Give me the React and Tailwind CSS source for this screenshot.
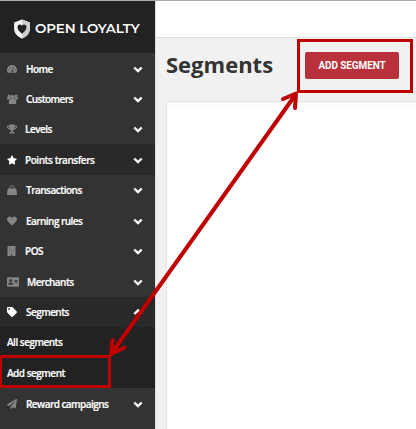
import React from "react";
import {
  FaTrophy, FaStar, FaHeart, FaAddressCard, FaTag, FaPaperPlane,
} from "react-icons/fa";

function GaugeIcon({ className }) {
  return (
    <svg viewBox="0 0 20 20" className={className} fill="currentColor">
      <path d="M10 2C4.500 2 0 6.500 0 12c0 2 .5 3.700 1.300 5.500h17.400c.8-1.800 1.300-3.500 1.300-5.500C20 6.500 15.500 2 10 2Z" />
      <g fill="#444444">
        <circle cx="3.500" cy="12" r="1.200" />
        <circle cx="5.600" cy="7.700" r="1.200" />
        <circle cx="10" cy="5.500" r="1.200" />
        <circle cx="16.500" cy="12" r="1.200" />
        <path d="m12.300 7 1.600.6-2 5.400a2.300 2.300 0 1 1-1.600-.6Z" />
      </g>
    </svg>
  );
}

function PeopleIcon({ className }) {
  return (
    <svg viewBox="0 0 22 20" className={className} fill="currentColor">
      <circle cx="4" cy="4" r="3" />
      <circle cx="18" cy="4" r="3" />
      <path d="M0 11V9c0-1.500 1-2.500 2.200-2.500h4.500V11ZM22 11V9c0-1.500-1-2.500-2.200-2.500h-4.500V11Z" />
      <circle cx="11" cy="6" r="4.200" />
      <path d="M3.500 17.500c0-4.500 1-7.500 4-7.500h7c3 0 4 3 4 7.500 0 1.500-1 2.500-2.500 2.500H6c-1.500 0-2.500-1-2.500-2.500Z" />
    </svg>
  );
}

function BagIcon({ className }) {
  return (
    <svg viewBox="0 0 20 20" className={className} fill="currentColor">
      <path d="M1.500 7h17L20 17.500V20H0v-2.500Z" />
      <path d="M6 9V5.500a4 4 0 0 1 8 0V9" fill="none" stroke="currentColor" strokeWidth="2" />
    </svg>
  );
}

function BuildingIcon({ className }) {
  return (
    <svg viewBox="0 0 18 20" className={className} fill="currentColor">
      <path d="M1 0h16v20H1Z" />
      <path d="M4 4h10M4 8h10M4 12h10" stroke="#6a6a6a" strokeWidth="1.500" strokeDasharray="2 2" />
      <path d="M7 16h4v4H7Z" fill="#555555" />
    </svg>
  );
}

function Chevron({ up }) {
  return (
    <svg viewBox="0 0 10 10" className="size-[10px] shrink-0" fill="none" stroke="white" strokeWidth="2.400">
      {up ? <path d="M1.300 7 5 3.400 8.700 7" /> : <path d="M1.300 3.500 5 7.100 8.700 3.500" />}
    </svg>
  );
}

function Row({ icon: Icon, label, active, open, size = "size-[10px]", row, text = "" }) {
  return (
    <div className={`flex shrink-0 items-center pl-[7px] pr-[12px] ${row} ${active ? "bg-[#292929]" : "bg-[#333333]"}`}>
      <span className={`flex w-[19px] shrink-0 ${active ? "text-white" : "text-[#858585]"}`}>
        <Icon className={size} />
      </span>
      <span className={`flex-1 whitespace-nowrap text-[10px] font-semibold leading-none text-white [-webkit-text-stroke:0.2px_white] ${text || "tracking-[-0.55px]"}`}>{label}</span>
      <Chevron up={open} />
    </div>
  );
}

function Logo() {
  return (
    <svg viewBox="0 0 18 21" className="h-[20px] w-[18px] shrink-0">
      <path d="M9 0.500 17.300 3.600V10c0 5-3.200 8.500-8.300 10.600C3.900 18.500.7 15 .7 10V3.600Z" fill="#f4f4f4" />
      <path d="M9 .5 17.300 3.600V10c0 5-3.200 8.500-8.300 10.600Z" fill="#cfcfcf" />
      <path d="M9 15.500C6.500 13.200 4.300 11.300 4.300 8.600c0-3 3.300-3.800 4.700-1.600 1.400-2.200 4.700-1.400 4.700 1.600 0 2.700-2.200 4.600-4.700 6.900Z" fill="#222222" />
    </svg>
  );
}

export default function App() {
  return (
    <div className="relative flex h-[429px] w-[416px] overflow-hidden border-t border-[#aaaaaa] bg-[#f1f1f1] font-['Open_Sans',sans-serif]">
      <aside className="flex w-[155px] shrink-0 flex-col bg-[#333333]">
        <div className="flex h-[52px] shrink-0 items-center bg-[#222222] pl-[13px] pt-[4px]">
          <Logo />
          <span className="ml-[4px] whitespace-nowrap font-['Montserrat','Open_Sans',sans-serif] text-[13.5px] font-semibold leading-none tracking-[-0.12px] text-white">OPEN LOYALTY</span>
        </div>
        <Row icon={GaugeIcon} label="Home" row="h-[31px]" />
        <Row icon={PeopleIcon} label="Customers" size="h-[10px] w-[11px]" text="tracking-[-0.6px]" row="h-[30px]" />
        <Row icon={FaTrophy} label="Levels" text="-ml-px tracking-[-0.5px]" row="h-[30px]" />
        <Row icon={FaStar} label="Points transfers" active text="-ml-px tracking-[-0.45px]" row="h-[31px]" />
        <Row icon={BagIcon} label="Transactions" text="tracking-[-0.5px]" row="h-[30px]" />
        <Row icon={FaHeart} label="Earning rules" row="h-[31px]" />
        <Row icon={BuildingIcon} label="POS" size="h-[10px] w-[9px]" text="-ml-px tracking-[-0.5px]" row="h-[30px]" />
        <Row icon={FaAddressCard} label="Merchants" size="size-[12px]" text="ml-px tracking-[-0.55px]" row="h-[31px]" />
        <Row icon={FaTag} label="Segments" active open row="h-[30px]" />
        <div className="flex h-[61px] shrink-0 flex-col bg-[#222222] pl-[7px] text-[10px] font-semibold tracking-[-0.5px] text-white [-webkit-text-stroke:0.2px_white]">
          <span className="h-[30px] leading-[30px]">All segments</span>
          <span className="h-[31px] leading-[32px]">Add segment</span>
        </div>
        <Row icon={FaPaperPlane} label="Reward campaigns" row="h-[31px]" />
      </aside>
      <main className="flex min-w-0 flex-1 flex-col border-l border-[#dddddd]">
        <div className="h-[37px] shrink-0 border-b border-[#e2e2e2] bg-white" />
        <div className="flex h-[63px] shrink-0 items-start pl-[10px] pt-[14px]">
          <h1 className="-mt-px w-[139px] text-[22px] font-bold leading-[26px] text-[#333333]">Segments</h1>
          <button className="h-[27px] w-[94px] rounded-[2px] bg-[#b9313b] font-['Roboto',sans-serif] text-[10px] font-bold leading-[27px] tracking-[-0.1px] text-white">ADD SEGMENT</button>
        </div>
        <div className="ml-[10px] flex-1 border-l border-t border-[#e4e4e4] bg-white">
          <div className="h-[3px] bg-[#fafafa]" />
        </div>
      </main>
      <svg className="pointer-events-none absolute left-0 -top-px h-[429px] w-[416px]" viewBox="0 0 416 429" fill="none" stroke="#c00000" strokeWidth="3">
        <rect x="298.500" y="40.500" width="113" height="51" />
        <rect x="0.500" y="356.500" width="109" height="30" />
        <path d="M111 354 296 94" strokeWidth="4" />
        <path d="M283 99 296 93.500 295 108M112.500 340 111 354 124.500 347.500" strokeWidth="4" strokeLinecap="round" strokeLinejoin="round" />
      </svg>
    </div>
  );
}
